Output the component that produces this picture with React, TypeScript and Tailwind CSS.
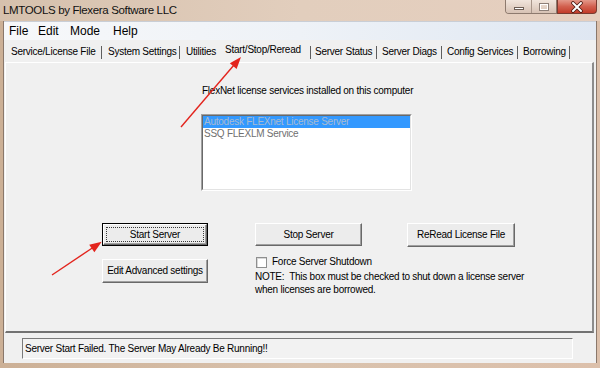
import React from "react";

function Tab({ w, pl, label, sep = true, selected = false }: { w: string; pl: string; label: string; sep?: boolean; selected?: boolean }) {
  return (
    <div className={`flex h-[22px] items-center justify-between ${w} ${pl}`}>
      <span className={selected ? "-mt-[2px] whitespace-nowrap" : "mt-[1px] whitespace-nowrap"}>{label}</span>
      {sep ? <span className="mt-[2px] h-[13px] w-[1px] bg-[#5e5e5e]" /> : <span />}
    </div>
  );
}

export default function App() {
  return (
    <div className="relative h-[368px] w-[600px] overflow-hidden bg-gradient-to-r from-[#ccb096] via-[#d9c2ad] to-[#dcc0ab] font-['Liberation_Sans',Arial,sans-serif] text-black">
      {/* Title bar */}
      <div className="flex h-[21px] items-start justify-between bg-gradient-to-r from-[#d6c1ad] via-[#e2cebd] to-[#e6cfbf]">
        <span className="pl-[3px] pt-[3px] text-[11.5px] leading-[14px] tracking-[-0.35px] text-[#111]">
          LMTOOLS by Flexera Software LLC
        </span>
        <div className="mr-[3px] flex items-start">
          <div className="flex h-[14px] overflow-hidden rounded-bl-[4px] border border-t-0 border-[#8d7a6e]">
            <div className="flex h-full w-[26px] items-end justify-center border-r border-[#a8968a] bg-gradient-to-b from-[#f1e5dc] to-[#d7c2b4] pb-[3px]">
              <span className="h-[3px] w-[10px] border border-[#6d5e55] bg-white" />
            </div>
            <div className="flex h-full w-[24px] items-center justify-center bg-gradient-to-b from-[#f1e5dc] to-[#d7c2b4]">
              <span className="h-[8px] w-[10px] border border-[#8d7f77] shadow-[inset_0_0_0_1px_#ffffff]" />
            </div>
          </div>
          <div className="flex h-[14px] w-[40px] items-center justify-center rounded-br-[4px] border border-t-0 border-[#7a3b30] bg-gradient-to-b from-[#e3988a] via-[#d2604f] to-[#c23a28]">
            <svg width="14" height="12" viewBox="0 0 14 12">
              <path d="M3 2 L11 10 M11 2 L3 10" stroke="#4a1810" strokeWidth="3.6" strokeLinecap="round" />
              <path d="M3 2 L11 10 M11 2 L3 10" stroke="#ffffff" strokeWidth="2" strokeLinecap="round" />
            </svg>
          </div>
        </div>
      </div>

      {/* Client area */}
      <div className="mx-[3px] flex h-[342px] flex-col border-l border-r border-[#8a786b] bg-[#f0f0f0]">
        {/* Menu bar */}
        <div className="flex h-[19px] items-center border-t border-[#c9ced6] bg-gradient-to-r from-[#f7f8fa] via-[#eef2f7] to-[#dfe7f2] pl-[5px] text-[12px] leading-[14px]">
          <span className="w-[29px]">File</span>
          <span className="w-[32px]">Edit</span>
          <span className="w-[43px]">Mode</span>
          <span>Help</span>
        </div>

        {/* Tab strip */}
        <div className="flex h-[22px] text-[10px] leading-[12px] tracking-[-0.25px]">
          <Tab w="w-[98px]" pl="pl-[7px]" label="Service/License File" />
          <Tab w="w-[78px]" pl="pl-[6px]" label="System Settings" />
          <Tab w="w-[39px]" pl="pl-[6px]" label="Utilities" sep={false} />
          <Tab w="w-[92px]" pl="pl-[6px]" label="Start/Stop/Reread" selected />
          <Tab w="w-[66px]" pl="pl-[4px]" label="Server Status" />
          <Tab w="w-[65px]" pl="pl-[5px]" label="Server Diags" />
          <Tab w="w-[76px]" pl="pl-[5px]" label="Config Services" />
          <Tab w="w-[52px]" pl="pl-[5px]" label="Borrowing" />
        </div>

        {/* Tab panel */}
        <div className="ml-[1px] mr-[2px] flex h-[271px] flex-col border-b-2 border-l border-r-2 border-t border-b-[#727272] border-l-white border-r-[#8c8c8c] border-t-white text-[10px] leading-[12px] tracking-[-0.25px]">
          <div className="ml-[196px] mt-[22px] whitespace-nowrap">FlexNet license services installed on this computer</div>

          <div className="ml-[195px] mt-[17px] h-[77px] w-[211px] border border-b-white border-l-[#a0a0a0] border-r-white border-t-[#a0a0a0] bg-white">
            <div className="h-full w-full border border-b-[#e3e3e3] border-l-[#696969] border-r-[#e3e3e3] border-t-[#696969]">
              <div className="h-[12px] whitespace-nowrap bg-[#3399ff] pl-[1px] text-[#a9bbd0]">Autodesk FLEXnet License Server</div>
              <div className="h-[12px] whitespace-nowrap pl-[1px] text-[#707070]">SSQ FLEXLM Service</div>
            </div>
          </div>

          {/* Buttons row */}
          <div className="ml-[96px] mt-[32px] flex">
            <div className="flex h-[23px] w-[106px] border border-black">
              <div className="flex flex-1 border border-b-[#696969] border-l-white border-r-[#696969] border-t-white bg-[#ececec] p-[2px] shadow-[inset_-1px_-1px_0_#a0a0a0]">
                <div className="flex flex-1 items-center justify-center border border-dotted border-[#3a3a3a]">Start Server</div>
              </div>
            </div>
            <div className="ml-[47px] flex h-[23px] w-[107px] items-center justify-center border border-b-[#696969] border-l-white border-r-[#696969] border-t-white bg-[#ececec] shadow-[inset_-1px_-1px_0_#a0a0a0]">
              Stop Server
            </div>
            <div className="ml-[45px] flex h-[24px] w-[108px] items-center justify-center border border-b-[#696969] border-l-white border-r-[#696969] border-t-white bg-[#ececec] shadow-[inset_-1px_-1px_0_#a0a0a0]">
              ReRead License File
            </div>
          </div>

          {/* Second row */}
          <div className="ml-[96px] flex">
            <div className="mt-[12px] flex h-[24px] w-[106px] items-center justify-center border border-b-[#696969] border-l-white border-r-[#696969] border-t-white bg-[#ececec] shadow-[inset_-1px_-1px_0_#a0a0a0]">
              Edit Advanced settings
            </div>
            <div className="ml-[47px] flex flex-col">
              <div className="mt-[9px] flex items-center pl-[1px]">
                <span className="h-[11px] w-[11px] border border-[#8e8f8f] bg-white shadow-[inset_1px_1px_0_#d8d8d8]" />
                <span className="ml-[5px] whitespace-nowrap">Force Server Shutdown</span>
              </div>
              <div className="mt-[2px] whitespace-pre leading-[13px]">
                {"NOTE:  This box must be checked to shut down a license server\nwhen licenses are borrowed."}
              </div>
            </div>
          </div>
        </div>

        {/* Status bar */}
        <div className="ml-[18px] mt-[5px] flex h-[21px] w-[551px] items-center border border-b-white border-l-[#7a7a7a] border-r-white border-t-[#7a7a7a] bg-[#f2f2f2] pl-[2px] pt-[1px] text-[10px] leading-[12px] tracking-[-0.25px]">
          Server Start Failed. The Server May Already Be Running!!
        </div>
      </div>

      {/* Red annotation arrows */}
      <svg className="pointer-events-none absolute left-0 top-0" width="600" height="368" viewBox="0 0 600 368">
        <line x1="181" y1="127" x2="234" y2="65" stroke="#e3241d" strokeWidth="1.4" />
        <polygon points="241,57 236.6,69 229.8,63.2" fill="#e3241d" />
        <line x1="52" y1="275" x2="93" y2="247.5" stroke="#e3241d" strokeWidth="1.4" />
        <polygon points="101.7,241.7 94.4,252.2 89.2,244.8" fill="#e3241d" />
      </svg>
    </div>
  );
}
